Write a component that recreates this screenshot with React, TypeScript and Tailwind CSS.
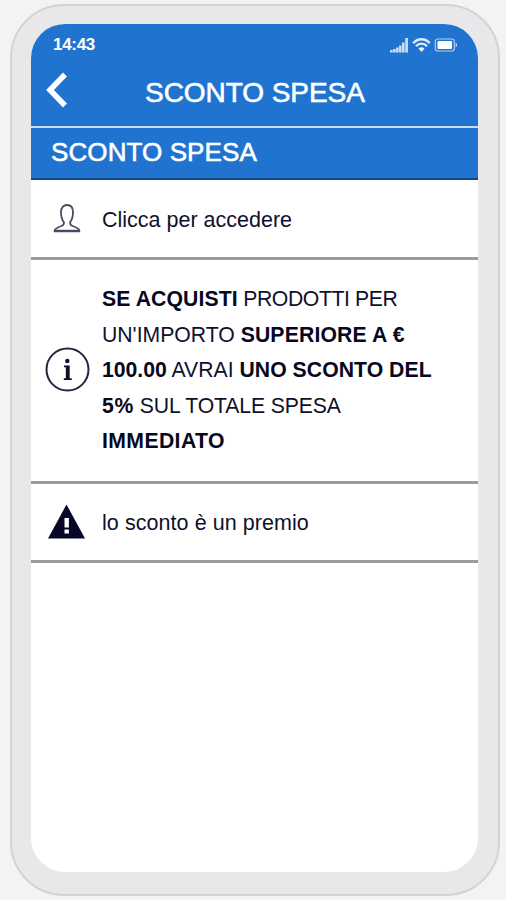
import React from "react";

function StatusIcons() {
  return (
    <svg className="h-4 w-[68px]" viewBox="0 0 68 16" fill="#fff">
      <g opacity="0.75">
        <path d="M0 12h2.600v2.500H0zM3 11h2.600v3.500H3zM6 9.500h2.600v5H6zM9 7.500h2.600v7H9zM12 4.500h2.600v10H12zM15.200 0h2.800v14.500h-2.800z" />
      </g>
      <g fill="none" stroke="#fff" strokeWidth="2.400" opacity="0.85">
        <path d="M23.200 5.200C27.800-.1 35.200-.1 39.800 5.200" />
        <path d="M26 8.300c3.100-3.600 7.900-3.600 11 0" />
      </g>
      <path d="M28.500 10.600Q31.500 7.900 34.500 10.600L31.500 13.900z" opacity="0.9" />
      <rect x="45.300" y="1" width="19" height="12" rx="2.500" fill="none" stroke="#fff" strokeWidth="1.200" opacity="0.65" />
      <rect x="47.500" y="3" width="14.500" height="8" rx="1" />
      <path d="M65.700 4.500q2.800 2.500 0 5z" opacity="0.75" />
    </svg>
  );
}

export default function App() {
  return (
    <main className="h-[900px] w-[506px] overflow-hidden bg-[#f3f3f3] pl-[10px] pt-1 font-['Liberation_Sans',Arial,sans-serif] text-[#10102e]">
      <div className="h-[892px] w-[490px] rounded-[54px] border-2 border-[#d3d3d4] bg-[#e8e8ea] pl-[19px] pt-[18px]">
        <div className="flex h-[848px] w-[447px] flex-col overflow-hidden rounded-[34px] bg-white">
          <header className="h-[104px] shrink-0 border-b-2 border-[#c9e0f8] bg-[#2074cf] text-white">
            <div className="flex items-start justify-between pl-[22px] pr-[20px] pt-[11px]">
              <span className="text-[17px] font-bold leading-[20px] tracking-[-0.3px]">14:43</span>
              <div className="pt-[3px]"><StatusIcons /></div>
            </div>
            <div className="flex items-start pl-[15px] pt-[17px]">
              <svg className="h-9 w-[22px]" viewBox="0 0 22 36" fill="none" stroke="#fff" strokeWidth="5.500">
                <path d="M19 2.500L4 18L19 33.500" />
              </svg>
              <h1 className="ml-[77px] mt-[5px] whitespace-nowrap text-[28px] leading-[32px] tracking-[-0.050px] [-webkit-text-stroke:0.6px_white]">SCONTO SPESA</h1>
            </div>
          </header>
          <h2 className="h-[52px] shrink-0 whitespace-nowrap border-b-2 border-[#174a83] bg-[#2074cf] pl-[20px] pt-[9px] text-[26px] leading-[30px] tracking-[0.100px] text-white [-webkit-text-stroke:0.6px_white]">SCONTO SPESA</h2>
          <section className="flex h-[80px] shrink-0 items-center border-b-[3px] border-[#999b9d]">
            <svg className="ml-[22px] h-[30px] w-[28px]" viewBox="0 0 28 30" fill="none" stroke="#4b4b5f" strokeWidth="1.800" strokeLinejoin="round">
              <path d="M1.500 27C2 24 5 23.200 8.500 22C10.800 21 11.300 20 10.800 18C9 15.800 8 12.500 8 8C8 3.500 10.500 1 14 1S20 3.500 20 8C20 12.500 19 15.800 17.200 18C16.700 20 17.200 21 19.500 22C23 23.200 26 24 26.500 27Z" />
              <path d="M1 27h26" strokeWidth="2.300" />
            </svg>
            <p className="ml-[21px] mt-[3px] text-[21.500px] leading-[26px]">Clicca per accedere</p>
          </section>
          <section className="flex h-[224px] shrink-0 items-center border-b-[3px] border-[#999b9d]">
            <svg className="mb-[2px] ml-[14px] h-[46px] w-[46px]" viewBox="0 0 46 46">
              <circle cx="22.500" cy="22.500" r="21" fill="none" stroke="#252543" strokeWidth="2" />
              <circle cx="22.300" cy="14" r="2.200" fill="#10102e" />
              <path d="M19 18.500h5.700v12.700h2v1.800h-7.900v-1.800h2V20.300H19z" fill="#10102e" />
            </svg>
            <div className="-mt-px ml-[11px] whitespace-nowrap text-[21.200px] leading-[35.600px] [&_b]:text-[#070720]">
              <p><b className="tracking-[0.100px]">SE ACQUISTI</b><span className="tracking-[-0.400px]"> PRODOTTI PER</span></p>
              <p>UN'IMPORTO <b className="tracking-[0.150px]">SUPERIORE A €</b></p>
              <p><b>100.00</b> AVRAI <b className="tracking-[0.050px]">UNO SCONTO DEL</b></p>
              <p><b className="tracking-[0.700px]">5%</b><span className="tracking-[-0.120px]"> SUL TOTALE SPESA</span></p>
              <p><b className="tracking-[0.400px]">IMMEDIATO</b></p>
            </div>
          </section>
          <section className="flex h-[79px] shrink-0 items-center border-b-[3px] border-[#999b9d]">
            <svg className="mb-[2px] ml-[17px] h-[35px] w-[37px]" viewBox="0 0 37 35">
              <path d="M18.500 .5L37 34.500H0z" fill="#070727" />
              <path d="M16.500 14h4.400v9.500h-4.400zM16.500 25.500h4.400v4h-4.400z" fill="#fff" />
            </svg>
            <p className="ml-[17px] mt-[2px] text-[21.500px] leading-[26px] tracking-[0.060px]">lo sconto è un premio</p>
          </section>
        </div>
      </div>
    </main>
  );
}
